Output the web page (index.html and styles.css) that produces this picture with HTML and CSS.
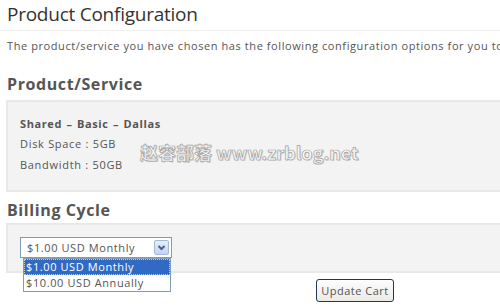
FILE: index.html
```html
<!DOCTYPE html>
<html>
<head>
<meta charset="utf-8">
<link rel="stylesheet" href="styles.css">
</head>
<body>
<div class="page">
  <h1 class="title">Product Configuration</h1>
  <p class="intro">The product/service you have chosen has the following configuration options for you to choose from.</p>

  <h2 class="section">Product/Service</h2>
  <div class="box product">
    <div class="pname">Shared – Basic – Dallas</div>
    <div class="spec">Disk Space : 5GB</div>
    <div class="spec">Bandwidth : 50GB</div>
    <div class="watermark">赵容部落 www.zrblog.net</div>
  </div>

  <h2 class="section billing">Billing Cycle</h2>
  <div class="box cycle">
    <div class="selectwrap">
      <div class="select">
        <span class="selval">$1.00 USD Monthly</span>
        <span class="arrow">
          <svg width="13" height="13" viewBox="0 0 13 13"><path d="M3.5 5 L6.5 8 L9.5 5" fill="none" stroke="#4d6185" stroke-width="2"/></svg>
        </span>
      </div>
      <div class="list">
        <div class="opt active">$1.00 USD Monthly</div>
        <div class="opt">$10.00 USD Annually</div>
      </div>
    </div>
  </div>
  <div class="actions">
    <button class="btn">Update Cart</button>
  </div>
</div>
</body>
</html>
```

FILE: styles.css
```css
html, body {
  margin: 0;
  padding: 0;
  background: #fff;
  overflow: hidden;
}
body {
  font-family: "Open Sans", "DejaVu Sans", sans-serif;
  color: #555;
  width: 500px;
  height: 307px;
}
.page {
  width: 500px;
  overflow: hidden;
}
.title {
  margin: 0;
  padding: 3px 0 5px 7px;
  font-size: 19px;
  font-weight: normal;
  letter-spacing: -0.25px;
  line-height: 22px;
  color: #333;
  border-bottom: 1px solid #eee;
}
.intro {
  margin: 0;
  padding: 8px 0 0 7px;
  font-size: 11px;
  letter-spacing: 0.58px;
  line-height: 14px;
  color: #555;
  white-space: nowrap;
}
.section {
  margin: 0;
  padding: 20px 0 0 7px;
  font-size: 16px;
  line-height: 22px;
  font-weight: 700;
  letter-spacing: 0.6px;
  color: #555;
}
.section.billing {
  padding-top: 7px;
}
.box {
  margin: 5px 0 0 6px;
  background: #f3f3f3;
  border: 2px solid #e8e8e8;
  border-right: none;
  position: relative;
}
.product {
  padding: 15px 0 9px 12px;
  height: 64px;
}
.pname {
  font-size: 11px;
  font-weight: 700;
  letter-spacing: 0.6px;
  word-spacing: 1px;
  line-height: 14px;
  color: #555;
  margin-bottom: 2px;
}
.spec {
  font-size: 11px;
  letter-spacing: 0.7px;
  line-height: 21px;
  color: #555;
}
.watermark {
  position: absolute;
  left: 132px;
  top: 37px;
  font-family: "Noto Sans CJK SC", "DejaVu Sans", sans-serif;
  font-weight: 700;
  font-size: 18px;
  color: #f7f7f7;
  -webkit-text-stroke: 0.7px #a0a0a0;
  text-shadow: 1px 1px 0 #d4d4d4;
  white-space: nowrap;
}
.billing + .box {
  margin-top: 2px;
}
.cycle {
  height: 50px;
  padding: 12px 0 0 12px;
  box-sizing: border-box;
}
.selectwrap {
  position: relative;
  width: 152px;
}
.select {
  display: flex;
  align-items: center;
  justify-content: space-between;
  height: 21px;
  box-sizing: border-box;
  border: 1px solid #7f9db9;
  background: #fff;
  padding: 0 2px 0 6px;
  font-size: 11px;
  letter-spacing: 0.6px;
  color: #555;
}
.selval {
  line-height: 19px;
}
.arrow {
  width: 15px;
  height: 15px;
  box-sizing: border-box;
  border: 1px solid #a6b9d6;
  border-radius: 2px;
  background: linear-gradient(#e6eefc, #c2d3f1);
  display: flex;
  align-items: center;
  justify-content: center;
}
.list {
  position: absolute;
  left: 3px;
  top: 21px;
  width: 148px;
  box-sizing: border-box;
  border: 1px solid #7f9db9;
  background: #fff;
  z-index: 2;
}
.opt {
  font-size: 11px;
  letter-spacing: 0.6px;
  line-height: 16px;
  padding: 0 2px;
  color: #555;
}
.opt.active {
  background: #316ac5;
  color: #fff;
  outline: 1px dotted #ccc;
  outline-offset: -1px;
}
.actions {
  display: flex;
  justify-content: center;
  padding: 6px 0 0 0;
  width: 710px;
}
.btn {
  font-family: "Open Sans", "DejaVu Sans", sans-serif;
  font-size: 11px;
  letter-spacing: 0.5px;
  color: #555;
  height: 23px;
  width: 78px;
  padding: 0;
  border: 1px solid #1c3a55;
  border-radius: 3px;
  background: linear-gradient(#fdfdfd, #eceae5);
}
```
